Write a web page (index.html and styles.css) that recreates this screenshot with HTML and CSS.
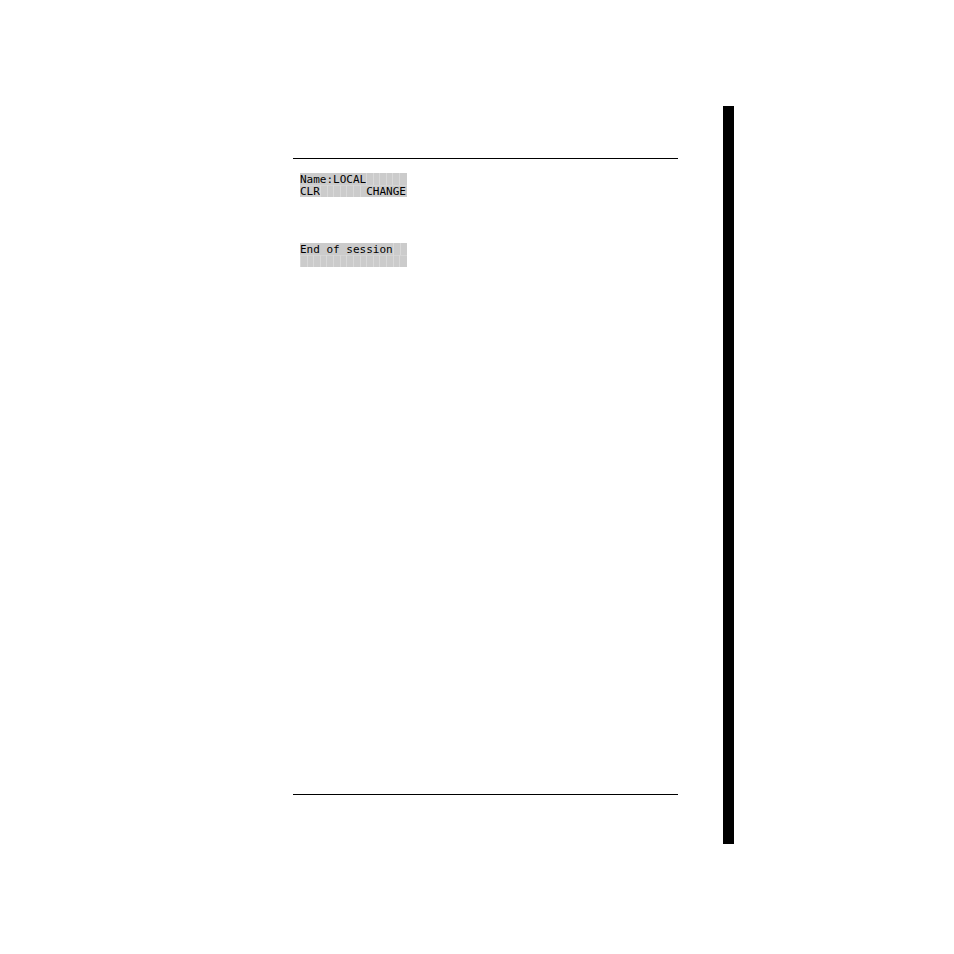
FILE: index.html
```html
<!DOCTYPE html>
<html lang="en">
<head>
<meta charset="utf-8">
<title>Name: LOCAL</title>
<link rel="stylesheet" href="styles.css">
</head>
<body>
<div class="page">
  <main class="sheet">
    <div class="content">
      <pre class="lcd"><span class="row">Name:LOCAL<span class="blank">      </span></span><span class="row">CLR<span class="blank">       </span>CHANGE</span></pre>
      <pre class="lcd"><span class="row">End of session<span class="blank">  </span></span><span class="row"><span class="blank">                </span></span></pre>
    </div>
  </main>
  <div class="edge"></div>
</div>
</body>
</html>
```
FILE: styles.css
```css
* {
  box-sizing: border-box;
}

body {
  margin: 0;
  background: #fff;
  color: #000;
}

.page {
  display: grid;
  grid-template-columns: 293fr 385fr 45fr 11px 220fr;
  min-height: 100vh;
  padding: 106px 0 110px;
}

.sheet {
  grid-column: 2;
  display: flex;
  padding: 52px 0 49px;
}

.content {
  flex: 1;
  display: flex;
  flex-direction: column;
  align-items: flex-start;
  gap: 46px;
  padding: 14px 7px;
  border-top: 1px solid #000;
  border-bottom: 1px solid #000;
}

.edge {
  grid-column: 4;
  background: #000;
}

/* Two-line, sixteen-character display */
.lcd {
  width: 107px;
  margin: 0;
  background: #cbcbcb;
  font: 11px/13px "DejaVu Sans Mono", "Liberation Mono", monospace;
}

.row {
  display: block;
  height: 12px;
}

.row + .row {
  box-shadow: inset 0 1px #d4d4d4;
}

/* Cell borders show through where no character is drawn */
.blank {
  display: inline-block;
  height: 12px;
  vertical-align: top;
  background: repeating-linear-gradient(to right, #d8d8d8 0 1px, transparent 1px 1ch);
}
```
